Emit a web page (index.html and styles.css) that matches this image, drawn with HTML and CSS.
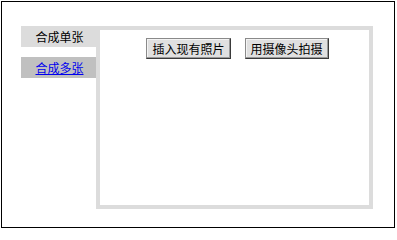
FILE: index.html
```html
<!DOCTYPE html>
<html>
<head>
<meta charset="utf-8">
<link rel="stylesheet" href="styles.css">
</head>
<body>
<div class="frame">
  <div class="layout">
    <nav class="tabs">
      <div class="tab tab-active">合成单张</div>
      <div class="tab tab-other"><a href="#">合成多张</a></div>
    </nav>
    <div class="panel">
      <div class="actions">
        <button class="btn">插入现有照片</button>
        <button class="btn">用摄像头拍摄</button>
      </div>
    </div>
  </div>
</div>
</body>
</html>
```
FILE: styles.css
```css
html, body {
  margin: 0;
  padding: 0;
  background: #fff;
}
body {
  font-family: "Noto Sans CJK SC", "Liberation Sans", sans-serif;
  font-size: 12px;
}
.frame {
  box-sizing: border-box;
  margin: 1px;
  width: 394px;
  height: 227px;
  border: 1px solid #000;
  padding: 24px 0 0 19px;
}
.layout {
  display: flex;
  align-items: flex-start;
}
.tabs {
  width: 75px;
  display: flex;
  flex-direction: column;
  gap: 10px;
}
.tab {
  height: 21px;
  line-height: 21px;
  text-align: center;
  padding-left: 2px;
}
.tab-active {
  background: #dcdcdc;
  color: #000;
}
.tab-other {
  background: #c0c0c0;
}
.tab-other a {
  color: #0000ee;
  text-decoration: underline;
}
.panel {
  box-sizing: border-box;
  width: 277px;
  height: 183px;
  border: 4px solid #dcdcdc;
  padding-top: 8px;
}
.actions {
  display: flex;
  justify-content: center;
  gap: 14px;
  padding-left: 6px;
}
.btn {
  box-sizing: border-box;
  height: 21px;
  padding: 0 5px;
  font-family: "Noto Sans CJK SC", "Liberation Sans", sans-serif;
  font-size: 12px;
  line-height: 17px;
  color: #000;
  background: #e0e0e0;
  border: 1px solid;
  border-color: #8a8a8a #3a3a3a #3a3a3a #8a8a8a;
  box-shadow: inset -1px -1px 0 #9a9a9a, inset 1px 1px 0 #f4f4f4;
  border-radius: 0;
}
```
